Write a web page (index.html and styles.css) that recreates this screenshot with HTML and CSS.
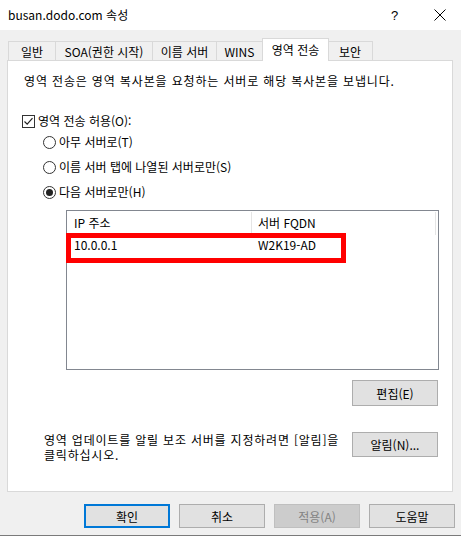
FILE: index.html
```html
<!DOCTYPE html>
<html lang="ko">
<head>
    <meta charset="UTF-8">
    <title>busan.dodo.com 속성</title>
    <link rel="stylesheet" href="styles.css">
</head>
<body>

<div class="window">
    <div class="titlebar">
        <span class="title">busan.dodo.com 속성</span>
        <span class="help">?</span>
        <span class="close">
            <svg width="12" height="12" viewBox="0 0 12 12"><path d="M0.5 0.5 L11.5 11.5 M11.5 0.5 L0.5 11.5" stroke="#000" stroke-width="1" fill="none"/></svg>
        </span>
    </div>

    <div class="tabs">
        <div class="tab t1">일반</div>
        <div class="tab t2">SOA(권한 시작)</div>
        <div class="tab t3">이름 서버</div>
        <div class="tab t4">WINS</div>
        <div class="tab active">영역 전송</div>
        <div class="tab t6">보안</div>
    </div>

    <div class="panel">
        <p class="desc">영역 전송은 영역 복사본을 요청하는 서버로 해당 복사본을 보냅니다.</p>

        <div class="opt check-row">
            <span class="checkbox">
                <svg width="11" height="11" viewBox="0 0 11 11"><path d="M1.5 5.5 L4.2 8.2 L9.5 2.2" stroke="#222" stroke-width="1.2" fill="none"/></svg>
            </span>
            <span>영역 전송 허용(O):</span>
        </div>

        <div class="radios">
            <div class="opt"><span class="radio"></span><span>아무 서버로(T)</span></div>
            <div class="opt"><span class="radio"></span><span>이름 서버 탭에 나열된 서버로만(S)</span></div>
            <div class="opt"><span class="radio on"></span><span>다음 서버로만(H)</span></div>
        </div>

        <div class="list">
            <div class="list-head">
                <div class="col c-ip">IP 주소</div>
                <div class="col c-fqdn">서버 FQDN</div>
            </div>
            <div class="list-row">
                <div class="col c-ip">10.0.0.1</div>
                <div class="col c-fqdn">W2K19-AD</div>
            </div>
            <div class="highlight"></div>
        </div>

        <div class="edit-row">
            <button class="btn">편집(E)</button>
        </div>

        <div class="notify-row">
            <p class="notify-text">영역 업데이트를 알릴 보조 서버를 지정하려면 [알림]을<br>클릭하십시오.</p>
            <button class="btn">알림(N)...</button>
        </div>
    </div>

    <div class="footer">
        <button class="btn default">확인</button>
        <button class="btn">취소</button>
        <button class="btn" disabled>적용(A)</button>
        <button class="btn">도움말</button>
    </div>
</div>

</body>
</html>
```

FILE: styles.css
```css
body {
    margin: 0;
    font-family: "Noto Sans CJK KR", "Noto Sans", sans-serif;
    font-size: 12px;
    color: #000;
    background-color: #f0f0f0;
}
.window {
    width: 461px;
    height: 536px;
    box-sizing: border-box;
    border-bottom: 1px solid #7a7a7a;
    background-color: #f0f0f0;
}
.titlebar {
    height: 30px;
    background-color: #fff;
    display: flex;
    align-items: center;
    padding-left: 8px;
}
.title {
    flex: 1;
    font-size: 12px;
    line-height: 16px;
}
.help {
    font-family: "Liberation Sans", sans-serif;
    font-size: 13px;
    width: 16px;
    margin-right: 27px;
}
.close {
    display: flex;
    margin-right: 15px;
}

/* tabs */
.tabs {
    display: flex;
    align-items: flex-end;
    padding-left: 8px;
    margin-top: 8px;
    height: 22px;
}
.tab {
    height: 19px;
    line-height: 19px;
    box-sizing: border-box;
    border: 1px solid #d9d9d9;
    border-bottom: none;
    border-right: none;
    text-align: center;
    background-color: #f0f0f0;
}
.t1 { width: 47px; }
.t2 { width: 97px; }
.t3 { width: 64px; }
.t4 { width: 46px; }
.t6 { width: 45px; border-right: 1px solid #d9d9d9; }
.tab.active {
    width: 67px;
    height: 23px;
    line-height: 21px;
    background-color: #fff;
    border-right: 1px solid #d9d9d9;
    margin-right: -1px;
    position: relative;
    z-index: 1;
    margin-bottom: -1px;
}
.tab.active + .tab { border-left: none; }

.panel {
    margin: 0 8px 0 7px;
    height: 432px;
    box-sizing: border-box;
    border: 1px solid #d9d9d9;
    background-color: #fff;
    padding: 12px 0 0 0;
}
.desc {
    margin: 0 0 0 16px;
    line-height: 16px;
    letter-spacing: 0.85px;
}
.opt {
    display: flex;
    align-items: center;
    height: 16px;
    line-height: 16px;
}
.check-row {
    margin: 24px 0 0 14px;
}
.checkbox {
    width: 11px;
    height: 11px;
    border: 1px solid #333;
    margin-right: 3px;
    display: flex;
}
.radios {
    margin: 5px 0 0 35px;
    display: flex;
    flex-direction: column;
    gap: 9px;
}
.radio {
    width: 11px;
    height: 11px;
    border: 1px solid #333;
    border-radius: 50%;
    margin-right: 3px;
    display: flex;
    align-items: center;
    justify-content: center;
}
.radio.on::after {
    content: "";
    width: 7px;
    height: 7px;
    border-radius: 50%;
    background-color: #222;
}

/* list */
.list {
    position: relative;
    margin: 10px 0 0 58px;
    width: 373px;
    height: 160px;
    box-sizing: border-box;
    border: 1px solid #828790;
}
.list-head, .list-row {
    display: flex;
}
.list-head {
    height: 23px;
    margin-top: 1px;
}
.list-head .col {
    line-height: 22px;
    border-right: 1px solid #e5e5e5;
    box-sizing: border-box;
}
.list-row {
    height: 24px;
    line-height: 20px;
}
.col {
    padding-left: 7px;
    box-sizing: border-box;
}
.c-ip { width: 185px; }
.c-fqdn { width: 184px; padding-left: 6px; }
.highlight {
    position: absolute;
    left: -1px;
    top: 22px;
    width: 280px;
    height: 30px;
    box-sizing: border-box;
    border: 5px solid #ff0000;
}

/* buttons */
.btn {
    width: 86px;
    height: 26px;
    box-sizing: border-box;
    font-family: "Noto Sans CJK KR", "Noto Sans", sans-serif;
    font-size: 12px;
    background-color: #e1e1e1;
    border: 1px solid #adadad;
    border-radius: 0;
    padding: 0;
    color: #000;
}
.btn:disabled {
    background-color: #cccccc;
    border-color: #bfbfbf;
    color: #838383;
}
.btn.default {
    border: 2px solid #0078d7;
}
.edit-row {
    display: flex;
    justify-content: flex-end;
    margin: 10px 14px 0 0;
}
.notify-row {
    display: flex;
    justify-content: space-between;
    align-items: flex-start;
    margin: 26px 14px 0 36px;
}
.notify-row .btn {
    height: 25px;
}
.notify-text {
    margin: 0;
    line-height: 15px;
    letter-spacing: 0.8px;
}
.footer {
    display: flex;
    justify-content: flex-end;
    gap: 9px;
    padding: 12px 6px 0 0;
}
.footer .btn {
    height: 24px;
}
```
